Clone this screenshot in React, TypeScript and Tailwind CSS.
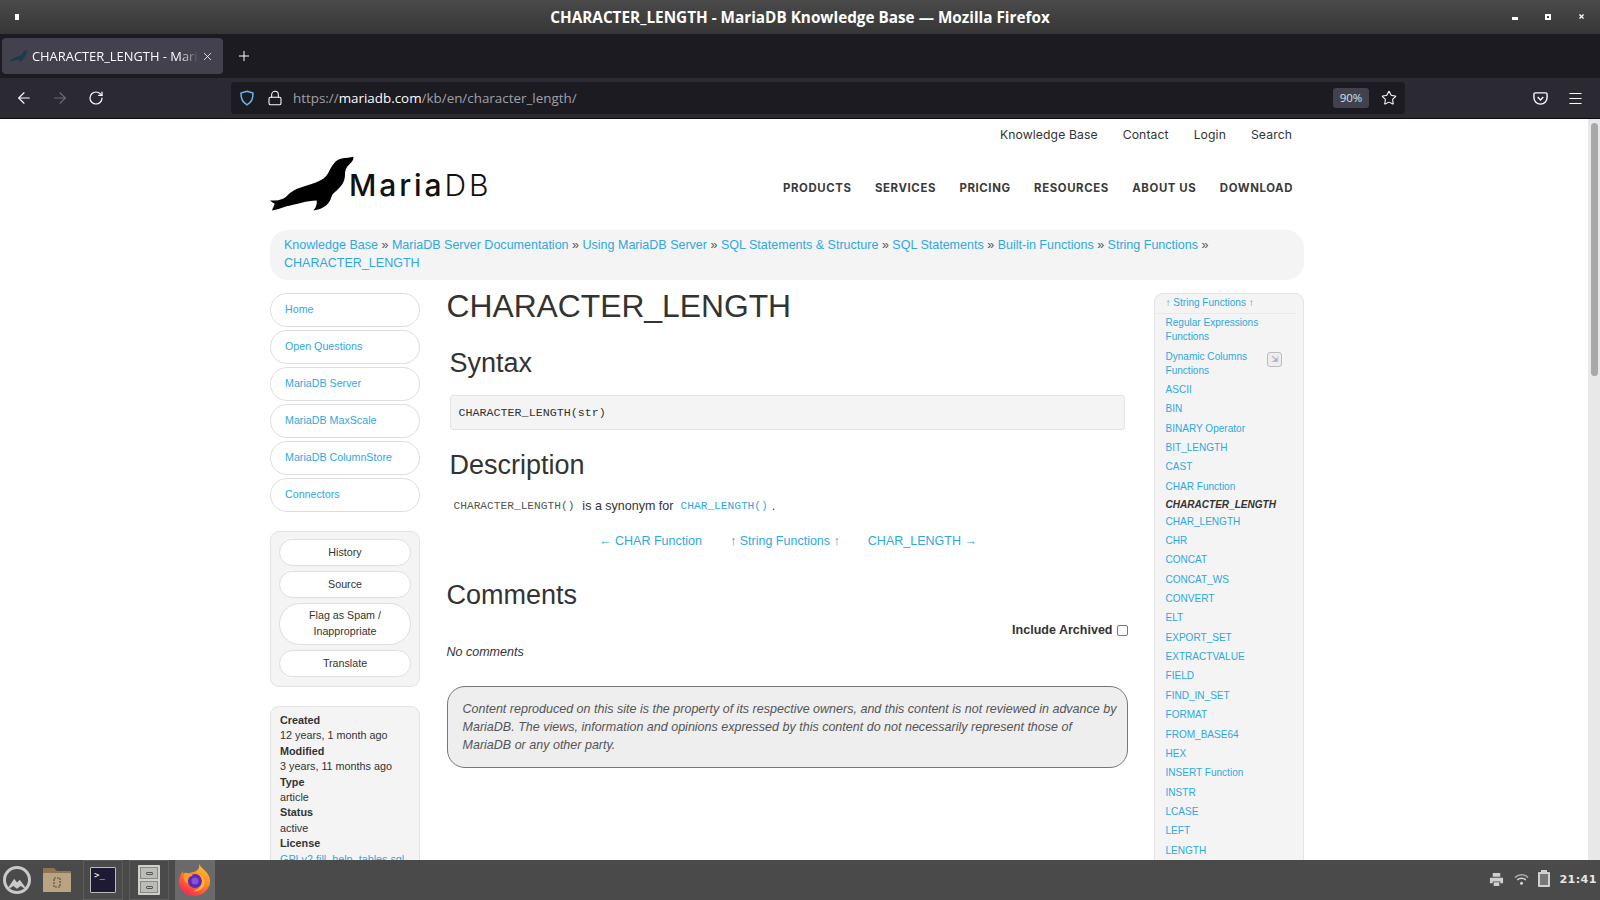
import { ArrowLeft, ArrowRight, Lock, Menu, Plus, RotateCw, Star, X } from "lucide-react";

const sans = "font-['Liberation_Sans',Arial,sans-serif]";
const mono = "font-['Liberation_Mono','Courier_New',monospace]";

const crumbs = [
  "Knowledge Base",
  "MariaDB Server Documentation",
  "Using MariaDB Server",
  "SQL Statements & Structure",
  "SQL Statements",
  "Built-in Functions",
  "String Functions",
];

const leftNav = ["Home", "Open Questions", "MariaDB Server", "MariaDB MaxScale", "MariaDB ColumnStore", "Connectors"];

const meta = [
  ["Created", "12 years, 1 month ago"],
  ["Modified", "3 years, 11 months ago"],
  ["Type", "article"],
  ["Status", "active"],
];

const rightNav = ["ASCII", "BIN", "BINARY Operator", "BIT_LENGTH", "CAST", "CHAR Function"];
const rightNav2 = [
  "CHR", "CONCAT", "CONCAT_WS", "CONVERT", "ELT", "EXPORT_SET", "EXTRACTVALUE", "FIELD",
  "FIND_IN_SET", "FORMAT", "FROM_BASE64", "HEX", "INSERT Function", "INSTR", "LCASE", "LEFT", "LENGTH", "LOAD_FILE",
];

const sealPath =
  "M280 97 C270 100 258 100 245 102 C225 106 215 125 205 145 C195 165 175 172 150 180 C125 188 100 195 85 210 C75 222 60 230 30 228 C35 233 40 235 44 238 C42 245 38 252 36 258 C50 256 65 250 80 245 C110 240 140 228 170 228 C172 238 168 250 160 258 C180 255 198 248 208 232 C215 222 212 215 222 205 C240 190 255 175 255 150 C255 135 262 125 270 118 C276 112 282 105 280 97 Z";

function Seal({ className }: { className: string }) {
  return (
    <svg viewBox="30 92 255 170" className={className}>
      <path d={sealPath} fill="currentColor" />
    </svg>
  );
}

function Firefox() {
  return (
    <svg viewBox="0 0 32 32" className="h-[32px] w-[32px]">
      <defs>
        <linearGradient id="ff" x1="0.8" y1="0" x2="0.2" y2="1">
          <stop offset="0" stopColor="#ffc72e" />
          <stop offset="0.5" stopColor="#ff7a2a" />
          <stop offset="1" stopColor="#f5215c" />
        </linearGradient>
      </defs>
      <path d="M20 0 C22 4 25 5 28 9 C32 14 32 20 29 24 C26 29 21 32 15 32 C8 32 1 27 0 19 C0 14 1 11 4 7 C4 9 5 11 7 12 C9 9 12 8 15 8 C18 7 21 5 20 0 Z" fill="url(#ff)" />
      <circle cx="16" cy="17" r="7" fill="#5b2bb5" />
      <circle cx="16" cy="17" r="3.5" fill="#8a4fe0" />
      <path d="M5 9 C9 8 12 10 14 12 C10 12 8 15 9 20 C5 18 4 13 5 9 Z" fill="#ff9a2e" />
      <path d="M20 11 C25 12 27 17 25 22 C23 26 18 28 14 27 C19 26 23 22 23 17 C23 15 22 13 20 11 Z" fill="#ffb02e" />
    </svg>
  );
}

function TitleBar() {
  return (
    <div className="relative flex h-[34px] shrink-0 items-center justify-center bg-gradient-to-b from-[#4a4a4a] to-[#363636]">
      <div className="absolute left-[15px] top-[14px] h-[6px] w-[4px] bg-white" />
      <span className="text-[15.3px] font-bold text-white" style={{ fontFamily: "'Open Sans', sans-serif" }}>
        CHARACTER_LENGTH - MariaDB Knowledge Base — Mozilla Firefox
      </span>
      <div className="absolute right-[15px] top-[13px] flex items-center gap-[27px]">
        <div className="mt-[4px] h-[3px] w-[6px] bg-white" />
        <div className="h-[6px] w-[6px] border-2 border-white" />
        <X size={7} strokeWidth={4} className="text-white" />
      </div>
    </div>
  );
}

function TabStrip() {
  return (
    <div className="flex h-[44px] shrink-0 items-center bg-[#1c1b22] pl-[2px]">
      <div className="flex h-[36px] w-[221px] items-center rounded-[4px] bg-[#42414d] pl-[8px]">
        <Seal className="h-[12px] w-[18px] shrink-0 text-[#1b3a4f]" />
        <span className="ml-[4px] w-[167px] overflow-hidden whitespace-nowrap pt-[2px] text-[12.9px] text-[#fbfbfe]" style={{ fontFamily: "'Open Sans', sans-serif", maskImage: "linear-gradient(to right, black 88%, transparent)" }}>
          CHARACTER_LENGTH - MariaDB Knowledge Base
        </span>
        <X size={13} strokeWidth={1.5} className="ml-[2px] shrink-0 text-[#fbfbfe]" />
      </div>
      <Plus size={16} strokeWidth={1.5} className="ml-[13px] text-[#fbfbfe]" />
    </div>
  );
}

function NavBar() {
  return (
    <div className="flex h-[41px] shrink-0 items-center border-b border-[#0c0c0d] bg-[#2b2a33]">
      <ArrowLeft size={18} strokeWidth={1.5} className="ml-[15px] text-[#fbfbfe]" />
      <ArrowRight size={18} strokeWidth={1.5} className="ml-[18px] text-[#6e6d75]" />
      <RotateCw size={16} strokeWidth={1.8} className="ml-[19px] text-[#fbfbfe]" />
      <div className="ml-[127px] flex h-[32px] w-[1174px] items-center rounded-[4px] bg-[#1c1b22] pl-[8px] pr-[8px]">
        <svg viewBox="0 0 16 16" className="h-[16px] w-[16px]" fill="none" stroke="#6ab5ef" strokeWidth="1.5">
          <path d="M8 1.2 L14 3 C14.2 8.5 12 12.6 8 14.8 C4 12.6 1.8 8.5 2 3 Z" />
        </svg>
        <Lock size={16} strokeWidth={1.6} className="ml-[12px] text-[#fbfbfe]" />
        <span className="ml-[10px] text-[13.4px] text-[#a0a0a8]" style={{ fontFamily: "'Open Sans', sans-serif" }}>
          https://<span className="text-[#fbfbfe]">mariadb.com</span>/kb/en/character_length/
        </span>
        <div className="ml-auto flex h-[20px] w-[36px] items-center justify-center rounded-[3px] bg-[#42414d] text-[11.5px] text-[#cfe3f7]" style={{ fontFamily: "'Open Sans', sans-serif" }}>
          90%
        </div>
        <Star size={16} strokeWidth={1.6} className="ml-[12px] text-[#fbfbfe]" />
      </div>
      <svg viewBox="0 0 16 16" className="ml-[128px] h-[15px] w-[15px]" fill="none" stroke="#fbfbfe" strokeWidth="1.5">
        <path d="M2.5 2 H13.5 C14.3 2 15 2.7 15 3.5 V7 C15 11 12 14 8 14 C4 14 1 11 1 7 V3.5 C1 2.7 1.7 2 2.5 2 Z" />
        <path d="M5 6.5 L8 9.5 L11 6.5" />
      </svg>
      <Menu size={17} strokeWidth={1.5} className="ml-[19px] text-[#fbfbfe]" />
    </div>
  );
}

function TopArea() {
  return (
    <div>
      <div className="flex justify-end gap-[25px] pr-[12px] pt-[8px] text-[12.2px] leading-[16px] tracking-[0.1px] text-[#333]" style={{ fontFamily: "Inter, sans-serif" }}>
        <span>Knowledge Base</span>
        <span>Contact</span>
        <span>Login</span>
        <span>Search</span>
      </div>
      <div className="mt-[12px] flex items-start justify-between pr-[11px]">
        <div className="flex h-[55px] w-[221px] items-start">
          <Seal className="h-[57px] w-[85px] shrink-0 text-black" />
          <div className="-ml-[6px] mt-[12px] flex items-baseline text-[30px] leading-[36px] tracking-[2.9px] text-[#111]" style={{ fontFamily: "Inter, sans-serif" }}>
            <span className="font-medium">Maria</span>
            <span className="font-light">DB</span>
          </div>
        </div>
        <div className="mt-[25px] flex gap-[23.5px] text-[11.4px] font-bold leading-[16px] tracking-[0.6px] text-[#3a3a3a]" style={{ fontFamily: "Inter, sans-serif" }}>
          <span>PRODUCTS</span>
          <span>SERVICES</span>
          <span>PRICING</span>
          <span>RESOURCES</span>
          <span>ABOUT US</span>
          <span>DOWNLOAD</span>
        </div>
      </div>
      <div className={`${sans} mt-[20px] rounded-[18px] bg-[#f4f4f4] px-[14px] pb-[8px] pt-[7px] text-[12.53px] leading-[17.5px] text-[#2fa8e0]`}>
        {crumbs.map((c) => (
          <span key={c}>
            {c} <span className="text-[#555]">»</span>{" "}
          </span>
        ))}
        <br />
        CHARACTER_LENGTH
      </div>
    </div>
  );
}

function LeftColumn() {
  return (
    <div className={`${sans} w-[150px] shrink-0 pt-[13px]`}>
      <div className="flex flex-col gap-[3px]">
        {leftNav.map((n) => (
          <div key={n} className="flex h-[34px] items-center rounded-[17px] border border-[#dedede] px-[14px] pb-[1px] text-[10.7px] text-[#2fa8e0]">
            {n}
          </div>
        ))}
      </div>
      <div className="mt-[19px] flex flex-col gap-[5px] rounded-[9px] border border-[#e3e3e3] bg-[#f4f4f4] px-[8px] pb-[9px] pt-[7px] text-center text-[10.7px] text-[#333]">
        <div className="flex h-[27px] items-center justify-center rounded-[14px] border border-[#dedede] bg-white">History</div>
        <div className="flex h-[27px] items-center justify-center rounded-[14px] border border-[#dedede] bg-white">Source</div>
        <div className="flex h-[42px] items-center justify-center rounded-[21px] border border-[#dedede] bg-white px-4 pb-[2px] leading-[16px]">Flag as Spam / Inappropriate</div>
        <div className="flex h-[27px] items-center justify-center rounded-[14px] border border-[#dedede] bg-white">Translate</div>
      </div>
      <div className="mt-[19px] rounded-[9px] border border-[#e3e3e3] bg-[#f4f4f4] px-[9px] pb-[8px] pt-[6px] text-[10.8px] leading-[15.4px] text-[#333]">
        {meta.map(([k, v]) => (
          <div key={k}>
            <div className="font-bold">{k}</div>
            <div>{v}</div>
          </div>
        ))}
        <div className="font-bold">License</div>
        <div className="whitespace-nowrap text-[#2fa8e0]">GPLv2 fill_help_tables.sql</div>
      </div>
    </div>
  );
}

function Main() {
  return (
    <div className={`${sans} w-[681px] shrink-0 text-[#333]`}>
      <h1 className="mt-[5px] text-[31.8px] leading-[42px]">CHARACTER_LENGTH</h1>
      <h2 className="ml-[3px] mt-[20px] text-[27px] leading-[32px]">Syntax</h2>
      <div className={`${mono} ml-[3px] mt-[16px] flex h-[35px] w-[675px] items-center rounded-[3px] border border-[#e3e3e3] bg-[#f4f4f4] px-[8px] pt-[2px] text-[11.7px] text-[#333]`}>
        CHARACTER_LENGTH(str)
      </div>
      <h2 className="ml-[3px] mt-[19px] text-[27px] leading-[32px]">Description</h2>
      <p className="ml-[7px] mt-[16px] flex items-center text-[12.53px] leading-[18px]">
        <span className={`${mono} text-[11.2px] text-[#555]`}>CHARACTER_LENGTH()</span>
        <span className="ml-[8px]">is a synonym for</span>
        <span className={`${mono} ml-[7px] text-[11.2px] text-[#2fa8e0]`}>CHAR_LENGTH()</span>
        <span className="ml-[4px]">.</span>
      </p>
      <div className="mt-[17px] flex justify-center gap-[28px] pl-[2px] text-[12.53px] leading-[18px] text-[#2fa8e0]">
        <span>← CHAR Function</span>
        <span>↑ String Functions ↑</span>
        <span>CHAR_LENGTH →</span>
      </div>
      <h2 className="mt-[29px] text-[27px] leading-[32px]">Comments</h2>
      <div className="mt-[10px] flex items-center justify-end gap-[4px] text-[12.53px] font-bold leading-[18px]">
        Include Archived
        <span className="h-[11px] w-[11px] rounded-[2px] border border-[#767676] bg-white" />
      </div>
      <p className="mt-[4px] text-[12.53px] italic leading-[18px]">No comments</p>
      <div className="mt-[25px] rounded-[18px] border border-[#777] bg-[#eee] pb-[13px] pl-[15px] pr-[10px] pt-[13px] text-[12.53px] italic leading-[18px] text-[#555]">
        Content reproduced on this site is the property of its respective owners, and this content is not reviewed in advance by MariaDB. The views, information and opinions expressed by this content do not necessarily represent those of MariaDB or any other party.
      </div>
    </div>
  );
}

function RightColumn() {
  return (
    <div className={`${sans} h-[800px] w-[150px] shrink-0 rounded-[9px] border border-[#e3e3e3] bg-[#f4f4f4] text-[10.05px] leading-[14px] text-[#2fa8e0]`}>
      <div className="mr-[8px] border-b border-[#e9e9e9] pb-[3px] pl-[10.5px] pt-[2px]">↑ String Functions ↑</div>
      <div className="flex flex-col pl-[10.5px]">
        <div className="mt-[1px] pt-[1px]">Regular Expressions<br />Functions</div>
        <div className="relative mt-[6px]">
          Dynamic Columns<br />Functions
          <div className="absolute right-[21px] top-[2px] flex h-[15px] w-[15px] items-center justify-center rounded-[3px] border border-[#bbb] bg-[#eee] text-[9px] leading-none text-[#999]">⇲</div>
        </div>
        <div className="mt-[5px] flex flex-col gap-[5.35px]">
          {rightNav.map((n) => (
            <div key={n}>{n}</div>
          ))}
        </div>
        <div className="mt-[4px] font-bold italic text-[#333]">CHARACTER_LENGTH</div>
        <div className="mt-[3px]">CHAR_LENGTH</div>
        <div className="mt-[5.35px] flex flex-col gap-[5.35px]">
          {rightNav2.map((n) => (
            <div key={n}>{n}</div>
          ))}
        </div>
      </div>
    </div>
  );
}

function Taskbar() {
  return (
    <div className="flex h-[40px] shrink-0 items-center bg-[#4a4a4a]">
      <div className="ml-[3px] flex h-[28px] w-[28px] items-end justify-center overflow-hidden rounded-full border-[3px] border-[#c9c9c9]">
        <svg viewBox="0 0 24 16" className="w-[22px]">
          <path d="M0 16 L9 3 L12 7 L15 4 L24 16 L16 11 L12 14 L8 11 Z" fill="#c9c9c9" />
        </svg>
      </div>
      <div className="ml-[11px] flex h-[40px] w-[30px] items-center">
        <svg viewBox="0 0 30 26" className="h-[26px] w-[30px]">
          <path d="M1 1 H12 L15 4 H29 V25 H1 Z" fill="#8d7550" />
          <rect x="1" y="6" width="28" height="19" rx="1" fill="#b8a482" />
          <rect x="12" y="11" width="6" height="9" fill="none" stroke="#5e4f37" strokeWidth="1.2" strokeDasharray="2 1" />
        </svg>
      </div>
      <div className="ml-[11px] flex h-[40px] w-[40px] items-center justify-center border border-[#5c5c5c]">
        <div className="h-[26px] w-[26px] rounded-[1px] border border-[#bbb] bg-[#1f1a33] pl-[3px] pt-[1px] text-[9px] leading-[12px] text-white" style={{ fontFamily: "'DejaVu Sans Mono', monospace" }}>
          &gt;_
        </div>
      </div>
      <div className="ml-[6px] flex h-[40px] w-[40px] items-center justify-center border border-[#5c5c5c]">
        <div className="flex h-[30px] w-[22px] flex-col gap-[2px] rounded-[1px] bg-[#d0d0cb] p-[2px]">
          <div className="flex flex-1 items-center justify-center border border-[#888] bg-[#bcbcb6]"><div className="h-[3px] w-[7px] rounded-[1px] border border-[#555]" /></div>
          <div className="flex flex-1 items-center justify-center border border-[#888] bg-[#bcbcb6]"><div className="h-[3px] w-[7px] rounded-[1px] border border-[#555]" /></div>
        </div>
      </div>
      <div className="ml-[6px] flex h-[40px] w-[40px] items-center justify-center bg-[#6a6a6a]">
        <Firefox />
      </div>
      <div className="ml-auto flex items-center pr-[3px]">
        <svg viewBox="0 0 16 16" className="h-[15px] w-[15px]" fill="#d0d0d0">
          <path d="M4 1 H12 V5 H4 Z M1 6 H15 V12 H12 V10 H4 V12 H1 Z M5 11 H11 V15 H5 Z" />
        </svg>
        <svg viewBox="0 0 16 16" className="ml-[10px] h-[15px] w-[15px]" fill="none" stroke="#a8a8a8" strokeWidth="1.6">
          <path d="M1 6 C5 2 11 2 15 6" />
          <path d="M3.5 8.5 C6 6.2 10 6.2 12.5 8.5" stroke="#d8d8d8" />
          <circle cx="8" cy="12" r="1.6" fill="#d8d8d8" stroke="none" />
        </svg>
        <div className="relative ml-[9px] h-[15px] w-[12px] rounded-[1px] border-2 border-[#d0d0d0] bg-[#777]">
          <div className="absolute -top-[4px] left-[1px] h-[2px] w-[6px] bg-[#d0d0d0]" />
        </div>
        <span className="ml-[9px] text-[11.2px] font-bold tracking-[0.4px] text-[#e6e6e6]" style={{ fontFamily: "'DejaVu Sans', sans-serif" }}>
          21:41
        </span>
      </div>
    </div>
  );
}

export default function App() {
  return (
    <div className="flex h-[900px] w-[1600px] flex-col overflow-hidden bg-white">
      <TitleBar />
      <TabStrip />
      <NavBar />
      <div className="flex min-h-0 flex-1">
        <div className="min-w-0 flex-1 overflow-hidden">
          <div className="ml-[270px] w-[1034px]">
            <TopArea />
            <div className="flex justify-between">
              <LeftColumn />
              <Main />
              <div className="pt-[13px]">
                <RightColumn />
              </div>
            </div>
          </div>
        </div>
        <div className="flex w-[12px] shrink-0 justify-center bg-[#e8e8e8] pt-[4px]">
          <div className="h-[253px] w-[7px] rounded-[4px] bg-[#a8a8a8]" />
        </div>
      </div>
      <Taskbar />
    </div>
  );
}
